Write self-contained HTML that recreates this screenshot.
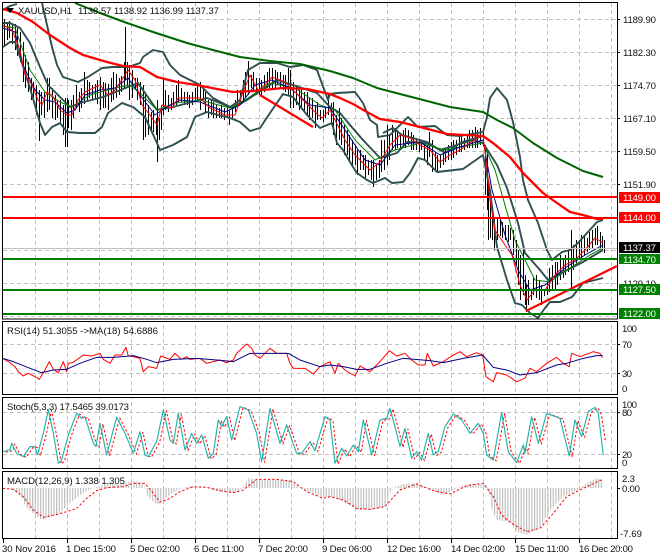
<!DOCTYPE html>
<html>
<head>
<meta charset="utf-8">
<style>
html,body{margin:0;padding:0;background:#fff;overflow:hidden}
svg{display:block}
text{font-family:"Liberation Sans",sans-serif;font-size:9.6px;fill:#111}
.l{stroke-linejoin:round;fill:none}
.g{stroke:#c0c0c0;stroke-width:1;stroke-dasharray:4 3;fill:none;shape-rendering:crispEdges}
</style>
</head>
<body>
<svg width="660" height="560" viewBox="0 0 660 560" xmlns="http://www.w3.org/2000/svg">
<defs>
<pattern id="st" width="2.67" height="10" patternUnits="userSpaceOnUse"><rect width="1.15" height="10" fill="#bdbdbd"/></pattern>
</defs>
<rect width="660" height="560" fill="#fff"/>
<!-- grid -->
<path class="g" d="M35.5 3V539M67.5 3V539M99.5 3V539M131.5 3V539M163.5 3V539M195.5 3V539M227.5 3V539M259.5 3V539M291.5 3V539M323.5 3V539M355.5 3V539M387.5 3V539M419.5 3V539M451.5 3V539M483.5 3V539M515.5 3V539M547.5 3V539M579.5 3V539M611.5 3V539"/>
<path class="g" d="M3 19.5H617M3 52.5H617M3 85.5H617M3 118.5H617M3 151.5H617M3 184.5H617M3 217.5H617M3 250.5H617M3 283.5H617M3 316.5H617M3 344.5H617M3 373.5H617M3 412.5H617M3 454.5H617"/>
<rect x="3" y="318" width="614" height="4" fill="#fff"/>
<rect x="3" y="395" width="614" height="2" fill="#fff"/>
<rect x="3" y="469" width="614" height="2" fill="#fff"/>
<!-- candles -->
<path stroke="#000" stroke-width="1" fill="none" shape-rendering="crispEdges" d="M4.5 19V45M7.5 22V40M9.5 21V38M12.5 24V44M15.5 24V50M17.5 28V56M20.5 32V62M23.5 42V82M25.5 55V88M28.5 62V92M31.5 78V100M33.5 82V98M36.5 85V115M39.5 90V141M41.5 92V115M44.5 92V118M47.5 78V112M49.5 78V110M52.5 88V118M55.5 95V120M57.5 100V118M60.5 100V122M63.5 105V135M65.5 98V147M67.5 98V147M68.5 100V128M71.5 100V130M73.5 95V118M76.5 85V108M79.5 92V112M81.5 88V108M84.5 72V104M87.5 80V100M89.5 82V98M92.5 85V100M95.5 84V98M97.5 80V104M100.5 77V110M103.5 82V108M105.5 83V108M108.5 84V110M111.5 78V102M113.5 72V100M116.5 74V98M119.5 78V95M121.5 76V92M124.5 62V88M125.5 27V80M127.5 62V85M129.5 65V100M132.5 70V98M135.5 78V90M137.5 78V100M140.5 82V105M143.5 85V140M145.5 95V137M148.5 105V135M151.5 112V130M153.5 110V132M156.5 118V135M157.5 100V162M159.5 118V140M161.5 105V130M163.5 79V115M165.5 90V110M168.5 95V112M171.5 98V110M173.5 92V108M176.5 85V105M178.5 80V102M181.5 88V102M184.5 92V105M187.5 92V105M189.5 95V108M192.5 92V105M195.5 88V100M197.5 85V100M200.5 82V110M203.5 85V100M205.5 92V112M208.5 100V118M211.5 100V115M213.5 102V118M216.5 105V118M219.5 108V118M221.5 105V118M224.5 108V120M227.5 105V118M229.5 110V125M232.5 108V118M235.5 100V112M237.5 90V105M240.5 90V105M243.5 80V102M245.5 72V98M248.5 61V95M251.5 75V88M253.5 72V92M256.5 78V95M259.5 78V95M261.5 80V95M264.5 75V92M267.5 72V88M269.5 68V88M272.5 68V88M275.5 70V88M277.5 72V85M280.5 72V88M283.5 75V90M285.5 75V92M288.5 68V95M290.5 70V108M293.5 82V108M296.5 85V105M299.5 90V110M301.5 90V108M304.5 92V112M307.5 92V115M309.5 98V120M312.5 98V118M315.5 105V128M317.5 102V120M320.5 110V120M323.5 110V122M325.5 108V118M328.5 95V115M331.5 103V125M333.5 102V135M336.5 115V145M339.5 108V140M341.5 118V145M344.5 125V155M347.5 130V155M349.5 135V160M352.5 140V165M355.5 145V165M357.5 150V175M360.5 150V170M363.5 155V170M365.5 155V178M368.5 160V175M371.5 160V180M373.5 160V187M376.5 165V180M379.5 160V178M381.5 140V172M384.5 140V170M387.5 125V165M389.5 135V160M392.5 125V150M395.5 128V150M397.5 130V148M400.5 133V150M403.5 130V148M405.5 128V148M408.5 130V145M411.5 132V150M413.5 135V150M416.5 138V150M419.5 140V152M421.5 140V150M424.5 142V160M427.5 145V165M429.5 132V157M432.5 140V172M435.5 152V170M437.5 155V172M440.5 155V168M443.5 150V165M445.5 148V162M448.5 145V160M451.5 142V160M453.5 140V158M456.5 140V155M459.5 135V152M461.5 135V152M464.5 138V150M467.5 135V148M469.5 130V148M472.5 130V148M475.5 127V148M477.5 130V148M480.5 128V145M483.5 130V146M485.5 145V195M487.5 150V210M488.5 180V240M490.5 200V238M492.5 215V240M494.5 218V250M497.5 218V240M500.5 220V236M502.5 222V238M505.5 225V240M508.5 225V242M510.5 228V240M513.5 230V255M516.5 240V265M518.5 250V285M520.5 255V300M523.5 250V295M525.5 275V305M526.5 285V312M528.5 280V305M531.5 290V300M533.5 278V295M536.5 275V298M539.5 280V300M541.5 285V305M544.5 290V296M547.5 282V295M549.5 268V292M552.5 265V290M555.5 262V290M557.5 262V285M560.5 255V280M563.5 258V278M565.5 255V275M568.5 250V272M571.5 230V288M573.5 245V270M576.5 240V265M579.5 240V258M581.5 235V258M584.5 235V255M587.5 238V252M589.5 232V250M592.5 230V248M595.5 228V245M597.5 226V245M600.5 232V248M602.5 236V250M604.5 240V253"/>
<!-- bollinger -->
<g class="l" stroke="#2f4f4f" stroke-width="1.9">
<path d="M3 10L10 6L17 4M42 3L47 25L52 47L57 65L63 77L78 82L88 77L102 68L113 67L128 67L140 63L143 57L153 50L163 52L170 65L180 75L200 85L213 98L230 107L240 100L248 70L260 63L277 63L290 67L303 65L317 70L328 100L330 94L337 93L355 92L363 103L370 120L377 125L378 137L390 135L408 117L418 127L435 126L447 135L460 136L483 132L487 117L490 98L497 88L507 100L513 122L520 157L523 180L528 200L538 223L547 250L552 260L562 252L570 250L578 243L597 222L603 220"/>
<path d="M3 47L10 42L15 42L20 57L30 88L40 123L45 135L52 127L60 123L67 132L80 133L95 133L102 127L108 113L122 103L133 107L145 117L157 143L160 150L173 145L187 137L195 117L207 112L230 118L240 122L250 131L260 128L270 113L283 94L293 97L307 115L320 128L332 123L337 143L343 150L353 167L357 173L367 180L373 183L385 178L392 183L403 182L410 173L418 158L425 160L437 172L463 169L483 155L490 190L497 247L507 280L515 303L522 305L530 313L538 318L545 308L550 302L560 302L572 297L583 283L603 278"/>
<path d="M3 23L10 23L20 28L30 43L40 67L48 85L60 97L70 107L80 103L103 97L138 83L157 110L173 107L207 98L233 108L247 100L277 80L293 85L317 93L330 107L340 113L350 125L363 140L380 158L397 153L407 142L427 143L440 150L450 147L473 140L483 143L497 165L507 188L518 223L525 253L540 270L548 280L567 270L583 262L603 250"/>
<path d="M383 133L393 128L402 135L427 142L445 153L462 142L483 136"/>
</g>
<!-- MAs -->
<path class="l" stroke="#006400" stroke-width="2" d="M75 3L100 13L127 23L153 32L187 43L213 50L240 57L270 61L300 64L330 71L353 78L377 88L400 94L427 101L450 107L483 112L497 120L513 128L533 143L557 158L583 171L603 177"/>
<path class="l" stroke="#008000" stroke-width="1" d="M3 26L15 28L30 70L45 92L60 102L72 107L90 95L115 88L130 85L142 95L157 110L175 103L200 100L230 108L245 100L270 83L295 88L320 105L335 110L355 140L375 160L395 150L420 143L445 150L483 143L495 170L515 240L535 280L550 282L570 268L590 255L603 248"/>
<path class="l" stroke="#00008b" stroke-width="1" d="M3 28L15 32L23 65L35 90L45 100L55 102L67 113L75 110L85 95L100 90L115 88L128 78L140 95L155 115L165 108L180 100L200 102L225 112L240 105L255 85L272 80L290 88L310 105L330 108L345 130L365 160L380 165L395 145L420 142L440 155L460 147L483 140L492 190L505 235L518 270L530 290L545 285L565 268L585 255L603 245"/>
<path class="l" stroke="#ff0000" stroke-width="1" d="M3 25L12 30L20 50L25 75L32 85L38 100L42 105L47 92L52 95L60 110L67 115L72 115L78 100L85 92L100 85L108 95L115 90L123 78L128 70L135 80L142 105L150 115L157 125L162 105L172 108L178 98L190 98L200 98L210 108L225 115L235 115L242 95L250 75L258 90L265 85L272 77L285 82L295 92L305 102L315 112L322 118L330 110L335 120L345 140L355 155L370 170L380 162L390 145L400 135L410 138L420 145L430 150L440 162L450 155L460 150L470 143L483 135L486 160L490 200L495 230L505 245L512 255L520 285L527 300L535 290L545 290L555 275L565 265L575 260L585 250L595 238L603 243"/>
<path class="l" stroke="#ff0000" stroke-width="2.3" d="M3 9L17 13L33 22L50 35L70 48L83 55L107 62L123 66L140 67L157 77L177 82L197 85L217 89L233 92L253 91L283 88L307 89L330 94L340 98L353 104L367 112L380 119L400 122L420 127L447 134L483 136L493 143L510 157L523 173L543 193L557 203L570 212L583 215L597 219L603 219"/>
<path class="l" stroke="#ff0000" stroke-width="2.2" d="M260 95L313 127M526 311L617 266"/>
<!-- price lines -->
<g shape-rendering="crispEdges" fill="none">
<path stroke="#c0c0c0" d="M3 248.5H617"/>
<path stroke="#ff0000" stroke-width="2" d="M3 197H617M3 218H617"/>
<path stroke="#008000" stroke-width="2" d="M3 259H617M3 290H617M3 314H617"/>
</g>
<!-- MACD histogram -->
<path fill="url(#st)" d="M3 488L13 490L20 495L27 508L35 515L42 520L50 517L60 513L70 503L80 495L88 490L97 487L107 483L120 484L133 481L143 483L148 497L157 505L167 497L177 490L190 486L207 488L220 492L233 493L243 488L248 478L257 480L290 480L300 488L317 495L330 498L333 497L350 505L357 510L370 510L385 507L392 488L403 484L417 483L430 490L443 495L457 488L470 484L483 484L488 488L492 510L497 520L510 522L517 532L527 535L540 527L550 510L563 497L577 490L587 483L597 478L603 480V488Z"/>
<g transform="translate(0,320) scale(.3333)">
<!-- RSI -->
<path class="l" stroke="#ff0000" stroke-width="3" d="M8 115L25 125L45 140L55 155L70 168L85 160L105 170L118 178L135 150L148 125L160 148L175 158L190 125L200 155L205 130L218 128L250 105L275 108L300 100L310 118L330 130L345 105L365 105L378 82L385 108L400 110L420 115L430 155L445 140L470 145L482 108L510 118L525 100L545 118L560 110L570 118L600 115L620 130L640 125L660 120L680 128L700 120L710 100L740 72L755 85L765 105L780 115L810 85L830 100L860 100L870 130L880 145L915 145L940 162L960 140L990 125L1005 160L1015 130L1035 150L1065 168L1080 138L1110 155L1140 125L1168 92L1190 108L1215 100L1235 120L1255 135L1275 135L1282 100L1300 138L1330 125L1355 108L1380 95L1400 110L1430 98L1448 105L1458 170L1480 185L1490 158L1520 165L1550 185L1575 175L1590 145L1610 155L1640 130L1670 112L1690 130L1708 140L1715 100L1740 110L1780 95L1800 100L1808 113"/>
<path class="l" stroke="#00008b" stroke-width="3" d="M8 115L40 125L90 145L125 158L160 150L200 148L240 130L290 112L340 112L400 107L440 118L470 128L520 118L590 115L650 120L700 125L750 100L800 100L865 100L900 120L960 140L990 135L1030 140L1070 148L1110 148L1160 130L1210 115L1290 122L1330 128L1390 115L1448 105L1480 142L1520 150L1560 165L1610 158L1670 135L1700 130L1750 115L1790 107L1808 107"/>
<!-- Stoch -->
<path class="l" stroke="#ff0000" stroke-width="3" stroke-dasharray="7 6" transform="translate(9,2)" d="M8 395L30 390L35 370L50 400L70 410L90 380L105 380L112 405L130 340L145 270L160 340L175 430L185 420L205 345L230 280L245 295L255 290L280 370L288 380L300 310L320 405L350 292L375 340L400 400L420 335L435 405L445 410L470 365L490 270L510 360L520 370L535 280L555 390L575 340L590 370L605 345L625 415L640 400L655 300L665 320L680 290L695 360L720 260L745 270L770 340L785 425L810 265L840 370L860 315L890 400L905 400L930 365L945 392L975 290L990 300L1005 430L1025 385L1040 408L1060 375L1075 395L1090 300L1115 405L1140 300L1160 295L1170 265L1185 320L1200 380L1215 325L1235 415L1250 395L1265 420L1285 340L1300 405L1315 395L1335 320L1360 282L1385 300L1410 340L1435 310L1450 340L1460 405L1480 420L1505 278L1525 395L1550 428L1570 375L1575 400L1595 290L1615 370L1640 280L1680 295L1708 408L1725 300L1745 350L1765 275L1785 262L1795 280L1808 365"/>
<path class="l" stroke="#20b2aa" stroke-width="3.4" d="M8 395L30 390L35 370L50 400L70 410L90 380L105 380L112 405L130 340L145 270L160 340L175 430L185 420L205 345L230 280L245 295L255 290L280 370L288 380L300 310L320 405L350 292L375 340L400 400L420 335L435 405L445 410L470 365L490 270L510 360L520 370L535 280L555 390L575 340L590 370L605 345L625 415L640 400L655 300L665 320L680 290L695 360L720 260L745 270L770 340L785 425L810 265L840 370L860 315L890 400L905 400L930 365L945 392L975 290L990 300L1005 430L1025 385L1040 408L1060 375L1075 395L1090 300L1115 405L1140 300L1160 295L1170 265L1185 320L1200 380L1215 325L1235 415L1250 395L1265 420L1285 340L1300 405L1315 395L1335 320L1360 282L1385 300L1410 340L1435 310L1450 340L1460 405L1480 420L1505 278L1525 395L1550 428L1570 375L1575 400L1595 290L1615 370L1640 280L1680 295L1708 408L1725 300L1745 350L1765 275L1785 262L1795 280L1810 405"/>
<!-- MACD signal -->
<path class="l" stroke="#ff0000" stroke-width="3" stroke-dasharray="7 6" d="M8 505L40 508L70 530L100 570L130 592L165 585L200 575L230 565L260 535L290 512L320 503L370 500L400 490L435 490L460 520L480 547L510 535L540 515L580 500L620 502L660 512L700 518L730 510L770 478L830 478L880 485L920 515L970 535L990 530L1030 540L1070 565L1110 568L1155 560L1200 510L1250 492L1300 512L1350 522L1400 497L1450 490L1480 530L1505 585L1535 610L1580 635L1620 625L1660 580L1700 530L1750 505L1808 478"/>
</g>
<!-- frames -->
<g fill="none" stroke="#000" stroke-width="1" shape-rendering="crispEdges">
<rect x="2.5" y="2.5" width="615" height="316.5"/>
<rect x="2.5" y="321.5" width="615" height="73"/>
<rect x="2.5" y="397.5" width="615" height="71"/>
<rect x="2.5" y="471.5" width="615" height="67"/>
<path d="M617 19.5h3M617 52.5h3M617 85.5h3M617 118.5h3M617 151.5h3M617 184.5h3M617 344.5h3M617 373.5h3M617 412.5h3M617 454.5h3M617 488.5h3M3.5 539v4M67.5 539v4M131.5 539v4M195.5 539v4M259.5 539v4M323.5 539v4M387.5 539v4M451.5 539v4M515.5 539v4M579.5 539v4"/>
</g>
<!-- right labels -->
<text x="623" y="23" textLength="33">1189.90</text>
<text x="623" y="56" textLength="33">1182.30</text>
<text x="623" y="89" textLength="33">1174.70</text>
<text x="623" y="122" textLength="33">1167.10</text>
<text x="623" y="155" textLength="33">1159.50</text>
<text x="623" y="188" textLength="33">1151.90</text>
<text x="623" y="287" textLength="33">1129.10</text>
<rect x="619" y="192" width="41" height="11" fill="#ff0000"/>
<text x="623" y="201" textLength="33" style="fill:#fff">1149.00</text>
<rect x="619" y="212" width="41" height="11" fill="#ff0000"/>
<text x="623" y="221" textLength="33" style="fill:#fff">1144.00</text>
<rect x="619" y="242" width="41" height="11" fill="#000"/>
<text x="623" y="251" textLength="33" style="fill:#fff">1137.37</text>
<rect x="619" y="254" width="41" height="10" fill="#008000"/>
<text x="623" y="263" textLength="33" style="fill:#fff">1134.70</text>
<rect x="619" y="284" width="41" height="11" fill="#008000"/>
<text x="623" y="293" textLength="33" style="fill:#fff">1127.50</text>
<rect x="619" y="308" width="41" height="11" fill="#008000"/>
<text x="623" y="317" textLength="33" style="fill:#fff">1122.00</text>
<text x="622" y="332" textLength="15">100</text>
<text x="622" y="348" textLength="10">70</text>
<text x="622" y="377" textLength="10">30</text>
<text x="622" y="392">0</text>
<text x="622" y="408" textLength="15">100</text>
<text x="622" y="416" textLength="10">80</text>
<text x="622" y="458" textLength="10">20</text>
<text x="622" y="466">0</text>
<text x="622" y="482" textLength="13">2.3</text>
<text x="622" y="492" textLength="18">0.00</text>
<text x="620" y="537" textLength="22">-7.69</text>
<!-- titles -->
<path d="M6 8h8l-4 5z" fill="#000"/>
<text x="18" y="14" textLength="54">XAUUSD,H1</text>
<text x="78" y="14" textLength="141">1138.57 1138.92 1136.99 1137.37</text>
<text x="7" y="334" textLength="151">RSI(14) 51.3055 -&gt;MA(18) 54.6886</text>
<text x="7" y="410" textLength="122">Stoch(5,3,3) 17.5465 39.0173</text>
<text x="7" y="484" textLength="118">MACD(12,26,9) 1.338 1.305</text>
<!-- time axis -->
<text x="2" y="552" textLength="54">30 Nov 2016</text>
<text x="66" y="552" textLength="50">1 Dec 15:00</text>
<text x="130" y="552" textLength="50">5 Dec 02:00</text>
<text x="194" y="552" textLength="50">6 Dec 11:00</text>
<text x="258" y="552" textLength="50">7 Dec 20:00</text>
<text x="322" y="552" textLength="50">9 Dec 06:00</text>
<text x="387" y="552" textLength="54">12 Dec 16:00</text>
<text x="451" y="552" textLength="54">14 Dec 02:00</text>
<text x="515" y="552" textLength="54">15 Dec 11:00</text>
<text x="579" y="552" textLength="54">16 Dec 20:00</text>
</svg>
</body>
</html>
